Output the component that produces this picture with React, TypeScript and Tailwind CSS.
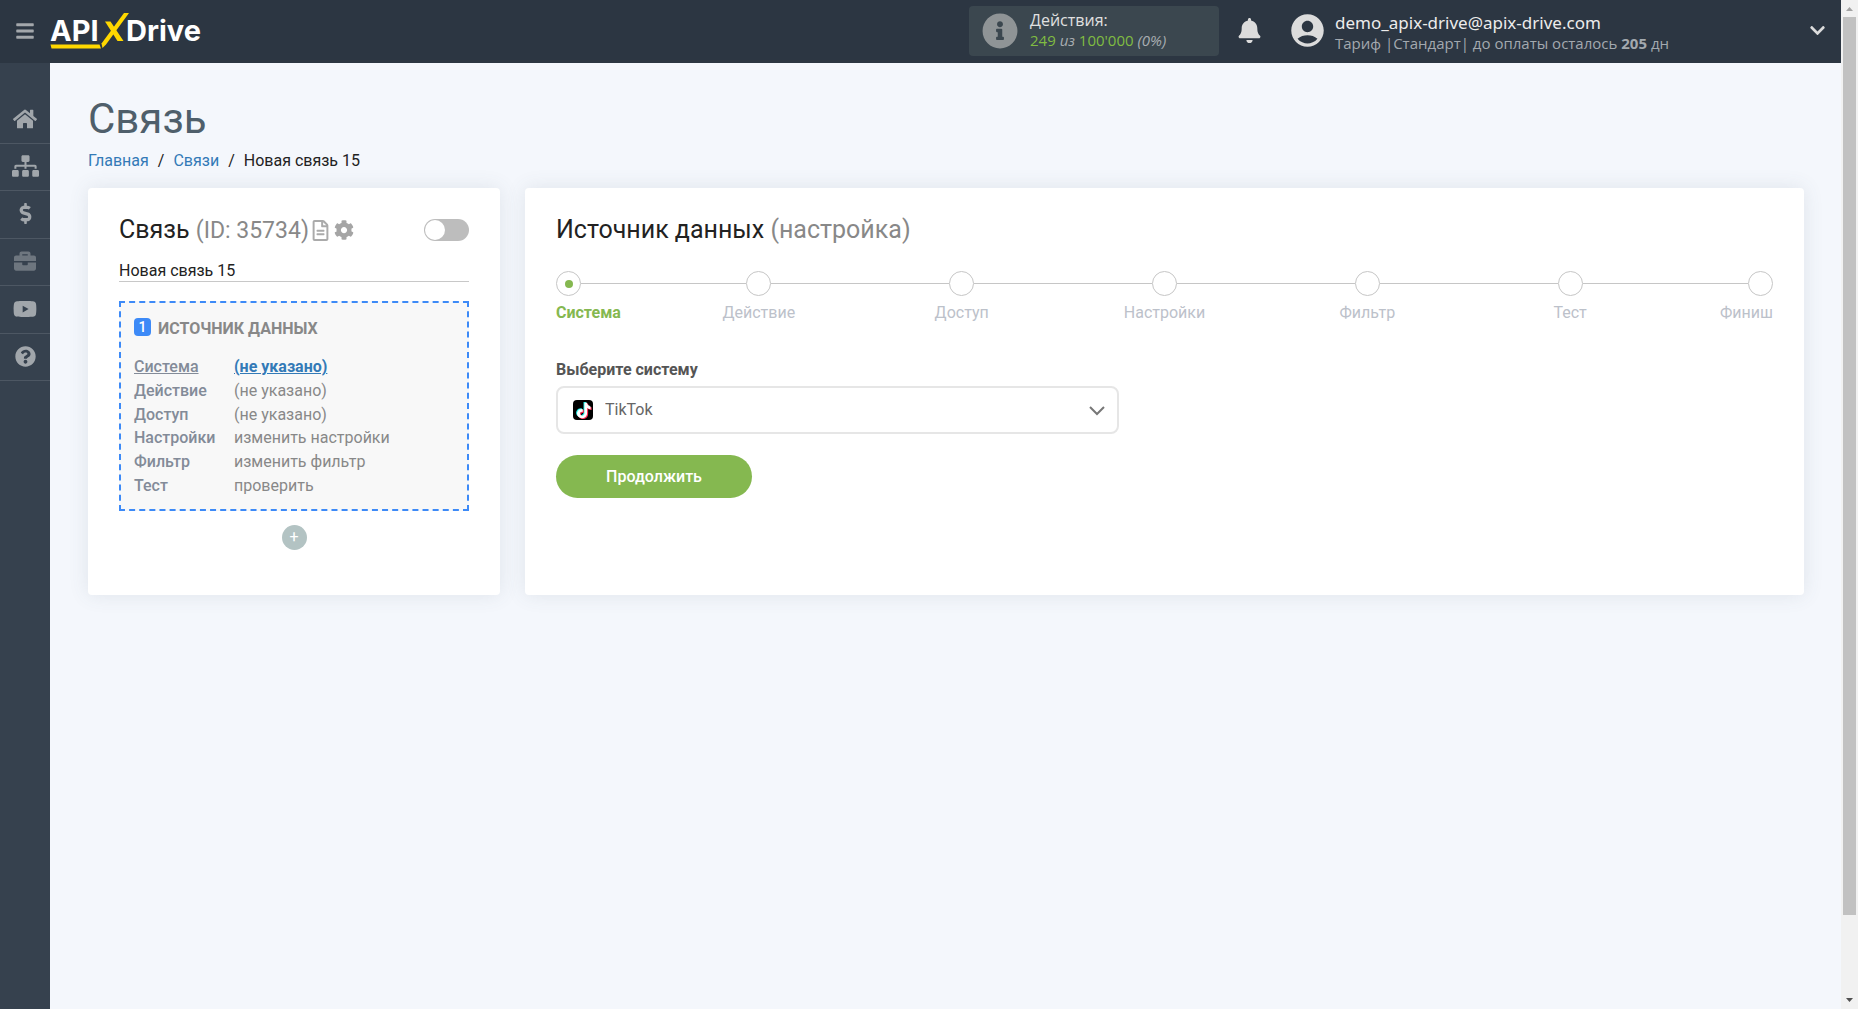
import { FaBars, FaBell, FaBriefcase, FaChevronDown, FaCog, FaDollarSign, FaHome, FaInfoCircle, FaQuestionCircle, FaRegFileAlt, FaSitemap, FaYoutube } from "react-icons/fa";
import { MdAccountCircle } from "react-icons/md";

const navItems = [
  { label: "Главная", icon: <FaHome size={24} /> },
  { label: "Связи", icon: <FaSitemap className="h-[22px] w-[27px]" /> },
  { label: "Оплата", icon: <FaDollarSign size={21} /> },
  { label: "Проекты", icon: <FaBriefcase size={22} />, dim: true },
  { label: "Видео", icon: <FaYoutube size={24} /> },
  { label: "Помощь", icon: <FaQuestionCircle size={21} /> },
];

const sourceRows = [
  { name: "Система", value: "(не указано)", active: true },
  { name: "Действие", value: "(не указано)" },
  { name: "Доступ", value: "(не указано)" },
  { name: "Настройки", value: "изменить настройки" },
  { name: "Фильтр", value: "изменить фильтр" },
  { name: "Тест", value: "проверить" },
];

const steps = ["Система", "Действие", "Доступ", "Настройки", "Фильтр", "Тест", "Финиш"];

function Logo() {
  return (
    <svg width="160" height="40" viewBox="0 0 160 40" role="img" aria-label="APIXDrive" className="font-['Inter']">
      <text x="0" y="30" fontSize="29" fontWeight="700" fill="#fff">API</text>
      <text x="76" y="30" fontSize="29" fontWeight="700" fill="#fff">Drive</text>
      <path d="M0.500 33.500H49.500L51 37.500H1.500Z" fill="#ffd800" />
      <path d="M74 2H79L56 33.500L52.500 37L51.500 32.500Z" fill="#ffd800" />
      <path d="M55 10.500H60.500L73.500 30H67.500Z" fill="#ffd800" />
    </svg>
  );
}

function Header() {
  return (
    <header className="flex h-[63px] shrink-0 items-center bg-[#2c3642] px-[15px] pb-[2px] font-['Open_Sans','Noto_Sans',sans-serif]">
      <button aria-label="Меню" className="mr-[15px] text-[#a3a7ab]">
        <FaBars size={20} />
      </button>
      <a href="#home">
        <Logo />
      </a>
      <div className="ml-auto flex h-[50px] w-[250px] items-center gap-3 rounded bg-[#3b474f] pl-[13px] text-[#e0e0e0]">
        <FaInfoCircle size={36} className="text-[#8f9496]" />
        <div className="pb-[2px]">
          <p className="text-base leading-[20px]">Действия:</p>
          <p className="text-[15px] leading-[20px] text-[#80bc42]">
            249 <i className="text-[#a8adb1]">из</i> 100&#39;000 <i className="text-[#a8adb1]">(0%)</i>
          </p>
        </div>
      </div>
      <button aria-label="Уведомления" className="ml-[18px] text-[#dcdcdc]">
        <FaBell size={25} />
      </button>
      <div className="ml-[26px] flex w-[521px] items-center gap-2 text-[#dcdcdc]">
        <MdAccountCircle size={39} />
        <div className="pt-1">
          <p className="font-['Noto_Sans'] text-[17px] leading-[20px] text-[#ececec]">demo_apix-drive@apix-drive.com</p>
          <p className="text-[15px] leading-[20px] text-[#a3a9af]">
            Тариф |Стандарт| до оплаты осталось <b>205</b> дн
          </p>
        </div>
      </div>
      <button aria-label="Открыть меню профиля" className="text-[#dcdcdc]">
        <FaChevronDown size={17} />
      </button>
    </header>
  );
}

function Sidebar() {
  return (
    <nav className="w-[50px] shrink-0 bg-[#36414e] pt-[33px]">
      <ul className="flex h-[285px] flex-col">
        {navItems.map((item) => (
          <li key={item.label} className="flex-1 border-b border-[#4d5763]">
            <a
              href="#nav"
              aria-label={item.label}
              className={item.dim ? "flex h-full items-center justify-center pb-px text-[#6e767f]" : "flex h-full items-center justify-center pb-px text-[#a1a6ab]"}
            >
              {item.icon}
            </a>
          </li>
        ))}
      </ul>
    </nav>
  );
}

function LinkCard() {
  return (
    <section className="w-[412px] shrink-0 rounded bg-white px-[31px] pt-[26px] pb-[45px] shadow-[0_0_20px_rgba(70,90,110,0.12)]">
      <div className="flex h-8 items-center">
        <h2 className="text-[25px] leading-8 text-[#222]">
          Связь <span className="text-[23px] text-[#888]">(ID: 35734)</span>
        </h2>
        <button aria-label="Описание" className="ml-px text-[#aaa]">
          <FaRegFileAlt size={21} />
        </button>
        <button aria-label="Параметры" className="ml-[3px] text-[#a5a5a5]">
          <FaCog size={20} />
        </button>
        <label className="ml-auto">
          <input type="checkbox" role="switch" aria-label="Включить связь" className="peer sr-only" />
          <span className="flex h-[22px] w-[45px] items-center rounded-full bg-[#bdbdbd] px-px peer-checked:justify-end">
            <span className="size-5 rounded-full bg-white" />
          </span>
        </label>
      </div>
      <input
        aria-label="Название связи"
        defaultValue="Новая связь 15"
        className="mt-[13px] block h-[23px] w-full border-b border-[#c8c8c8] pt-[2px] text-base text-[#222] outline-none"
      />
      <div className="mt-[19px] h-[210px] border-2 border-dashed border-[#3d8af7] bg-[#f8f8f8] px-[13px] pt-[15px]">
        <h3 className="flex items-start gap-[7px] text-base leading-[22px] font-bold text-[#888] uppercase">
          <span className="flex h-[18px] w-[17px] items-center justify-center rounded-sm bg-[#3d8af7] text-sm font-medium text-white">1</span>
          Источник данных
        </h3>
        <table className="mt-[15px] h-[143px] text-base text-[#888]">
          <tbody>
            {sourceRows.map((row) => (
              <tr key={row.name}>
                <th scope="row" className="w-[100px] p-0 text-left leading-5 font-medium text-[#838b98]">
                  <span className={row.active ? "underline" : ""}>{row.name}</span>
                </th>
                <td className="p-0 leading-5">
                  <a href="#edit" className={row.active ? "font-bold text-[#337ab7] underline" : ""}>
                    {row.value}
                  </a>
                </td>
              </tr>
            ))}
          </tbody>
        </table>
      </div>
      <button aria-label="Добавить" className="mx-auto mt-[14px] flex size-[25px] items-center justify-center rounded-full bg-[#b3c3c3] pb-px text-base text-white">
        +
      </button>
    </section>
  );
}

function Stepper() {
  const last = steps.length - 1;
  return (
    <ol className="flex">
      {steps.map((name, i) => {
        const edge = i === 0 || i === last;
        return (
          <li key={name} className={edge ? "flex-1" : "flex-[2]"}>
            <div className="flex items-center">
              {i > 0 && <span className="h-px flex-1 bg-[#c6c6c6]" />}
              <span className="flex size-[25px] items-center justify-center rounded-full border border-[#c6c6c6]">
                {i === 0 && <span className="size-2 rounded-full bg-[#85b850]" />}
              </span>
              {i < last && <span className="h-px flex-1 bg-[#c6c6c6]" />}
            </div>
            <p
              className={
                i === 0
                  ? "mt-[5px] text-left font-bold text-[#85b850]"
                  : i === last
                    ? "mt-[5px] text-right text-[#bcc1ca]"
                    : "mt-[5px] text-center text-[#bcc1ca]"
              }
            >
              {name}
            </p>
          </li>
        );
      })}
    </ol>
  );
}

function TikTokIcon() {
  const note = "M11 3.500h2.300c.2 1.900 1.300 3 3 3.100v2.400c-1.100 0-2.100-.3-3-.9v4.200c0 5-6.200 6-8.200 2.500-1.600-3.100.8-6.400 4.400-5.900v2.500c-1.500-.4-2.500.5-2.400 1.700.2 2.200 3.800 2.200 3.900-.5z";
  return (
    <svg width="20" height="20" viewBox="0 0 20 20" aria-hidden="true">
      <rect width="20" height="20" rx="4" fill="#000" />
      <g transform="translate(-1.200 -1.200) scale(1.150)">
        <path d={note} fill="#25f4ee" transform="translate(-.8 -.7)" />
        <path d={note} fill="#fe2c55" transform="translate(.9 .8)" />
        <path d={note} fill="#fff" />
      </g>
    </svg>
  );
}

function SourceCard() {
  return (
    <section className="flex-1 rounded bg-white px-[31px] pt-[26px] shadow-[0_0_20px_rgba(70,90,110,0.12)]">
      <h2 className="text-[25px] leading-8 text-[#222]">
        Источник данных <span className="text-[#888]">(настройка)</span>
      </h2>
      <div className="mt-[25px]">
        <Stepper />
      </div>
      <label htmlFor="system" className="mt-[33px] block text-base font-bold text-[#555]">
        Выберите систему
      </label>
      <div className="relative mt-1 max-w-[563px]">
        <select id="system" className="block h-12 w-full appearance-none rounded-lg border-2 border-[#e6e6e6] bg-white pr-10 pl-[47px] text-base text-[#666]">
          <option>TikTok</option>
        </select>
        <span className="pointer-events-none absolute inset-y-0 left-[17px] flex items-center">
          <TikTokIcon />
        </span>
        <svg width="16" height="10" viewBox="0 0 16 10" fill="none" stroke="#777" strokeWidth="2" className="pointer-events-none absolute top-[20px] right-[14px]" aria-hidden="true">
          <path d="M1 1l7 7 7-7" />
        </svg>
      </div>
      <button className="mt-[21px] h-[43px] w-[196px] rounded-full bg-[#85b850] text-base font-medium text-white">Продолжить</button>
    </section>
  );
}

function Scrollbar() {
  return (
    <div className="flex w-[17px] shrink-0 flex-col items-center bg-[#f1f1f1]" aria-hidden="true">
      <svg width="17" height="17" viewBox="0 0 17 17">
        <path d="M5 11L8.500 7L12 11Z" fill="#a3a3a3" />
      </svg>
      <div className="w-[13px] flex-[898] bg-[#c1c1c1]" />
      <div className="flex-[77]" />
      <svg width="17" height="17" viewBox="0 0 17 17">
        <path d="M5 6L8.500 10L12 6Z" fill="#505050" />
      </svg>
    </div>
  );
}

export default function App() {
  return (
    <div className="flex min-h-screen font-['Roboto',sans-serif]">
      <div className="flex min-w-0 flex-1 flex-col">
        <Header />
        <div className="flex flex-1">
          <Sidebar />
          <main className="flex-1 bg-[#f4f7fc] pt-[31px] pr-[37px] pl-[38px]">
            <h1 className="text-[42px] leading-[50px] text-[#4f5f6b]">Связь</h1>
            <nav className="mt-[5px] flex gap-[9px] text-base leading-6 text-[#222]">
              <a href="#home" className="text-[#337ab7]">Главная</a>
              <span>/</span>
              <a href="#links" className="text-[#337ab7]">Связи</a>
              <span>/</span>
              <span>Новая связь 15</span>
            </nav>
            <div className="mt-[15px] flex gap-[25px]">
              <LinkCard />
              <SourceCard />
            </div>
          </main>
        </div>
      </div>
      <Scrollbar />
    </div>
  );
}
